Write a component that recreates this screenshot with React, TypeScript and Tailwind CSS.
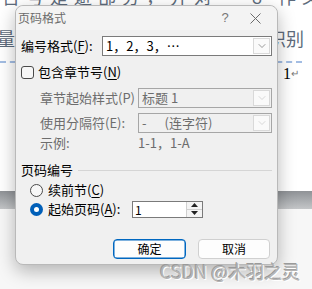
import { ChevronDown } from "lucide-react";

const cjk = { fontFamily: '"Noto Sans CJK SC", "Noto Sans", sans-serif' };

function Key({ k }: { k: string }) {
  return (
    <>
      (<span className="underline underline-offset-2">{k}</span>)
    </>
  );
}

function ComboArrow({ disabled }: { disabled?: boolean }) {
  return (
    <div className="my-[1px] mr-[1px] flex w-[17px] items-center justify-center border border-[#d9d9d9] bg-[#fafafa]">
      <ChevronDown
        className={disabled ? "h-3 w-3 text-[#c4c4c4]" : "h-3 w-3 text-[#5f5f5f]"}
        strokeWidth={1.25}
      />
    </div>
  );
}

function Radio({ checked }: { checked?: boolean }) {
  if (checked) {
    return (
      <div className="flex h-[13px] w-[13px] items-center justify-center rounded-full bg-[#005fb8]">
        <div className="h-[5px] w-[5px] rounded-full bg-white" />
      </div>
    );
  }
  return <div className="h-[13px] w-[13px] rounded-full border border-[#4a4a4a] bg-[#f7f7f7]" />;
}

export default function App() {
  return (
    <div className="relative h-[289px] w-[312px] overflow-hidden bg-white" style={cjk}>
      {/* document behind the dialog */}
      <div className="flex h-full flex-col">
        <div className="mt-[-14px] h-[20px] whitespace-nowrap pl-[2px] text-[18px] leading-[20px] tracking-[6px] text-[#5d6b7c]">
          台号是避部分，并对一 8 作义文
        </div>
        <div className="mt-[22px] flex h-[20px] items-center justify-between pr-[8px] text-[18px] leading-[20px] text-[#5d6b7c]">
          <span className="ml-[-3px]">量</span>
          <span>识别</span>
        </div>
        <div className="mt-[13px] mr-[10px] border-t-2 border-dashed border-[#a3bde3]" />
        <div className="mt-[3px] flex h-[16px] items-center pl-[283px] text-[16px] leading-[16px] text-black" style={{ fontFamily: '"Liberation Serif", serif' }}>
          1<span className="text-[10px] text-[#777]">↵</span>
        </div>
        <div className="mt-[109px] h-[18px] bg-gradient-to-b from-[#8f9296] via-[#a9acaf] to-[#c4c6c8]" />
        <div className="flex-1 bg-[#f7f7f7]" />
      </div>

      {/* dialog */}
      <div className="absolute left-[15px] top-[5px] flex h-[260px] w-[263px] flex-col rounded-[8px] border border-[#b9b9b9] bg-[#f0f0f0] text-[13px] leading-[20px] text-black shadow-[0_6px_18px_rgba(0,0,0,0.28)]">
        <div className="flex h-[24px] items-center rounded-t-[8px] bg-[#f3f3f3]">
          <span className="flex-1 pl-[2px] text-[12px] text-[#6b6b6b]">页码格式</span>
          <span className="w-[30px] text-center text-[13px] text-[#777]" style={{ fontFamily: '"Liberation Sans", sans-serif' }}>
            ?
          </span>
          <span className="mr-[7px] flex w-[30px] justify-center text-[#666]">
            <svg width="11" height="11" viewBox="0 0 11 11">
              <path d="M0.5 0.5 L10.5 10.5 M10.5 0.5 L0.5 10.5" stroke="#6b6b6b" strokeWidth="1" />
            </svg>
          </span>
        </div>

        <div className="mt-[6px] flex h-[20px] items-center px-[5px]">
          <span className="w-[81px] whitespace-nowrap">
            编号格式<Key k="F" />:
          </span>
          <div className="flex h-[20px] flex-1 border border-[#7a7a7a] bg-white">
            <span className="flex-1 pl-[3px] leading-[18px]">1，2，3，…</span>
            <ComboArrow />
          </div>
        </div>

        <div className="mt-[6px] flex h-[20px] items-center gap-[4px] px-[5px]">
          <div className="h-[13px] w-[13px] rounded-[3px] border border-[#4a4a4a] bg-[#f7f7f7]" />
          <span className="whitespace-nowrap">
            包含章节号<Key k="N" />
          </span>
        </div>

        <div className="mt-[6px] flex h-[20px] items-center pl-[24px] pr-[5px] text-[#6d6d6d]">
          <span className="w-[98px] whitespace-nowrap">章节起始样式(P)</span>
          <div className="flex h-[20px] flex-1 border border-[#a6a6a6] bg-[#f0f0f0]">
            <span className="flex-1 pl-[3px] leading-[18px]">标题 1</span>
            <ComboArrow disabled />
          </div>
        </div>

        <div className="mt-[5px] flex h-[20px] items-center pl-[24px] pr-[5px] text-[#6d6d6d]">
          <span className="w-[98px] whitespace-nowrap">使用分隔符(E):</span>
          <div className="flex h-[20px] flex-1 border border-[#a6a6a6] bg-[#f0f0f0]">
            <span className="flex flex-1 pl-[3px] leading-[18px]">
              -<span className="ml-[18px]">(连字符)</span>
            </span>
            <ComboArrow disabled />
          </div>
        </div>

        <div className="mt-[1px] flex h-[18px] items-center pl-[24px] pr-[5px] text-[#6d6d6d]">
          <span className="w-[98px]">示例:</span>
          <span>1-1，1-A</span>
        </div>

        <div className="mt-[10px] flex h-[16px] items-center gap-[5px] px-[5px]">
          <span className="whitespace-nowrap">页码编号</span>
          <div className="h-px flex-1 bg-[#d5d5d5]" />
        </div>

        <div className="mt-[3px] flex h-[18px] items-center gap-[5px] pl-[14px]">
          <Radio />
          <span className="whitespace-nowrap">
            续前节<Key k="C" />
          </span>
        </div>

        <div className="mt-[1px] flex h-[18px] items-center pl-[14px]">
          <Radio checked />
          <span className="ml-[5px] w-[84px] whitespace-nowrap">
            起始页码<Key k="A" />:
          </span>
          <div className="flex h-[17px] w-[71px] border border-[#7a7a7a] bg-white">
            <span className="flex-1 pl-[2px] text-[12px] leading-[15px]">1</span>
            <div className="flex w-[16px] flex-col border-l border-[#d0d0d0] bg-[#f4f4f4]">
              <div className="flex flex-1 items-center justify-center border-b border-[#d0d0d0]">
                <svg width="7" height="4" viewBox="0 0 7 4">
                  <path d="M3.5 0 L7 4 L0 4 Z" fill="#222" />
                </svg>
              </div>
              <div className="flex flex-1 items-center justify-center">
                <svg width="7" height="4" viewBox="0 0 7 4">
                  <path d="M0 0 L7 0 L3.5 4 Z" fill="#222" />
                </svg>
              </div>
            </div>
          </div>
        </div>

        <div className="mt-[21px] flex h-[20px] justify-end gap-[12px] pr-[7px] text-[12px]">
          <button className="w-[73px] rounded-[4px] border border-[#0067c0] bg-[#fdfdfd] leading-[18px] shadow-[inset_0_0_0_0.5px_#0067c0]">
            确定
          </button>
          <button className="w-[72px] rounded-[4px] border border-[#d0d0d0] bg-[#fdfdfd] leading-[18px]">
            取消
          </button>
        </div>
      </div>

      {/* watermark */}
      <div
        className="absolute left-[160px] top-[259px] whitespace-nowrap text-[18px] leading-[24px] text-[#b4b4b4] [text-shadow:1px_1px_0_#ffffff,-1px_-1px_0_#9a9a9a]"
        style={cjk}
      >
        CSDN @木羽之灵
      </div>
    </div>
  );
}
